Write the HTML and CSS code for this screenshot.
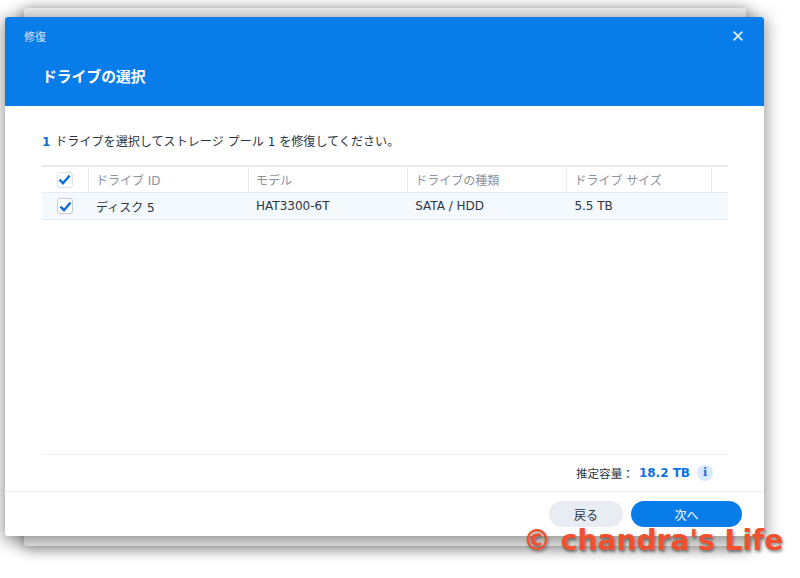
FILE: index.html
```html
<!DOCTYPE html>
<html lang="ja">
<head>
<meta charset="utf-8">
<title>修復</title>
<link rel="stylesheet" href="styles.css">
</head>
<body>
<div class="back-window"></div>
<section class="dialog">
  <header class="dialog-head">
    <div class="title-row">
      <span class="app-title">修復</span>
      <svg class="close" viewBox="0 0 10 10" aria-hidden="true"><path d="M0.6 0.6 9.4 9.4M9.4 0.6 0.6 9.4"/></svg>
    </div>
    <h1 class="step-title">ドライブの選択</h1>
  </header>
  <div class="dialog-body">
    <p class="prompt"><b class="num">1</b> ドライブを選択してストレージ プール 1 を修復してください。</p>
    <div class="table">
      <div class="row head">
        <div class="cell c-check"><span class="check"><svg viewBox="0 0 14 12" aria-hidden="true"><path d="M1.5 6.2 5.3 10 12.5 1.8"/></svg></span></div>
        <div class="cell c-id">ドライブ ID</div>
        <div class="cell c-col">モデル</div>
        <div class="cell c-col">ドライブの種類</div>
        <div class="cell c-size">ドライブ サイズ</div>
        <div class="cell c-end"></div>
      </div>
      <div class="row data">
        <div class="cell c-check"><span class="check big"><svg viewBox="0 0 14 12" aria-hidden="true"><path d="M1.5 6.2 5.3 10 12.5 1.8"/></svg></span></div>
        <div class="cell c-id">ディスク 5</div>
        <div class="cell c-col">HAT3300-6T</div>
        <div class="cell c-col">SATA / HDD</div>
        <div class="cell c-size">5.5 TB</div>
        <div class="cell c-end"></div>
      </div>
    </div>
    <div class="summary">
      <span class="sum-label">推定容量：</span>
      <b class="sum-value">18.2 TB</b>
      <span class="info">i</span>
    </div>
  </div>
  <footer class="dialog-foot">
    <button class="btn btn-back">戻る</button>
    <button class="btn btn-next">次へ</button>
  </footer>
</section>
<div class="watermark">© chandra's Life</div>
</body>
</html>
```
FILE: styles.css
```css
* { box-sizing: border-box; }
html, body { margin: 0; height: 100%; }
body {
  width: 800px;
  height: 578px;
  overflow: hidden;
  background: #fff;
  position: relative;
  font-family: "DejaVu Sans", "Noto Sans CJK JP", sans-serif;
  font-size: 12px;
  color: #2b3542;
}
.back-window {
  position: absolute;
  left: 24px;
  top: 8px;
  width: 722px;
  height: 538px;
  background: #f2f2f2;
  border-radius: 3px;
  box-shadow: 0 2px 14px 2px rgba(0,0,0,.38);
}
.dialog {
  position: absolute;
  left: 5px;
  top: 17px;
  width: 759px;
  height: 519px;
  display: flex;
  flex-direction: column;
  background: #fff;
  border-radius: 3px;
  box-shadow: 0 3px 16px 2px rgba(0,0,0,.42);
}
.dialog-head {
  height: 89px;
  flex: none;
  background: #087dea;
  color: #fff;
  border-radius: 3px 3px 0 0;
  padding: 0 19px;
}
.title-row {
  height: 38px;
  display: flex;
  align-items: center;
  justify-content: space-between;
}
.app-title { font-size: 11px; color: #cfe5fb; }
.close { width: 10px; height: 10px; margin-right: 2px; }
.close path { stroke: #dcecfc; stroke-width: 1.7; fill: none; }
.step-title {
  margin: 12px 0 0 18px;
  font-size: 14.8px;
  line-height: 20px;
  font-weight: 700;
}
.dialog-body {
  flex: 1;
  display: flex;
  flex-direction: column;
  padding: 0 36px 0 37px;
}
.prompt {
  margin: 28px 0 0;
  height: 17px;
  line-height: 17px;
  font-size: 12.08px;
}
.num { color: #0a6fd8; margin-right: 1px; }
.table { margin-top: 14px; flex: 1; }
.row { display: flex; height: 27px; align-items: stretch; }
.row.head {
  border-top: 2px solid #e6ebf1;
  border-bottom: 1px solid #e6ebf1;
  height: 28px;
  color: #8b939d;
}
.row.data {
  background: #f4f9fe;
  border-bottom: 1px solid #e3e9ef;
}
.cell {
  display: flex;
  align-items: center;
  padding-left: 7.5px;
}
.head .cell { border-right: 1px solid #e8edf2; }
.head .c-end { border-right: 0; }
.c-check { width: 46.5px; padding-left: 0; justify-content: center; flex: none; }
.c-id { width: 160px; flex: none; }
.c-col { width: 159.2px; flex: none; }
.c-size { width: 145px; flex: none; }
.c-end { flex: 1; padding: 0; }
.check {
  width: 16px;
  height: 16px;
  border: 1px solid #dde4ec;
  border-radius: 3px;
  background: #fff;
  display: flex;
  align-items: center;
  justify-content: center;
}
.check.big { border-color: #c2cbd6; }
.check svg { width: 13px; height: 11px; }
.check path { fill: none; stroke: #0a6fe0; stroke-width: 2.6; }
.summary {
  height: 37px;
  border-top: 1px solid #edf1f5;
  display: flex;
  align-items: center;
  justify-content: flex-end;
  padding-right: 15px;
  flex: none;
}
.sum-label { font-size: 11.6px; }
.sum-value { color: #0a73e6; font-size: 12px; margin-left: 5px; }
.info {
  width: 16px;
  height: 16px;
  margin-left: 7px;
  border-radius: 50%;
  background: #d8e9fb;
  color: #0a6fd8;
  font: 700 11px/16px "DejaVu Serif", serif;
  text-align: center;
}
.dialog-foot {
  height: 45px;
  flex: none;
  border-top: 1px solid #e9eef3;
  padding: 9px 22px 0 0;
  display: flex;
  justify-content: flex-end;
  gap: 8px;
  align-items: flex-start;
}
.btn {
  height: 26px;
  border: 0;
  border-radius: 13px;
  font: 12px "DejaVu Sans", "Noto Sans CJK JP", sans-serif;
  padding: 0;
}
.btn-back { width: 74px; background: #e8edf3; color: #2b3542; }
.btn-next { width: 111px; background: #087dea; color: #fff; }
.watermark {
  position: absolute;
  left: 523px;
  top: 525px;
  font: 700 28.1px/32px "DejaVu Sans", sans-serif;
  white-space: nowrap;
  color: #f2502f;
  text-shadow: 1px 2px 3px rgba(0,0,0,.45);
}
```
